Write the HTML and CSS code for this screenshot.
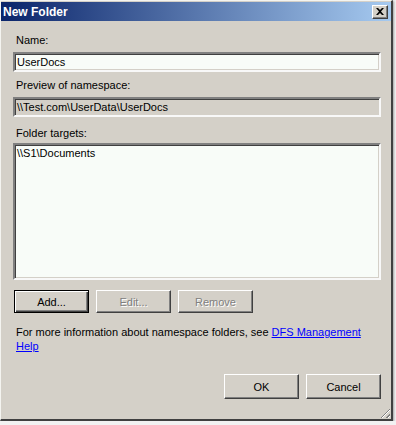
FILE: index.html
```html
<!DOCTYPE html>
<html lang="en">
<head>
    <meta charset="UTF-8">
    <title>New Folder</title>
    <link rel="stylesheet" href="styles.css">
</head>
<body>
    <div class="window">
        <div class="titlebar">
            <span class="title">New Folder</span>
            <button class="close">
                <svg width="8" height="7" viewBox="0 0 8 7"><path d="M0 0h2l2 2 2-2h2L5 3.5 8 7H6L4 5 2 7H0l3-3.5z" fill="#000"/></svg>
            </button>
        </div>
        <div class="content">
            <div class="label">Name:</div>
            <div class="field">UserDocs</div>
            <div class="label second">Preview of namespace:</div>
            <div class="field readonly">\\Test.com\UserData\UserDocs</div>
            <div class="label third">Folder targets:</div>
            <div class="list">\\S1\Documents</div>
            <div class="buttons">
                <button class="btn default">Add...</button>
                <button class="btn disabled">Edit...</button>
                <button class="btn disabled">Remove</button>
            </div>
            <p class="info">For more information about namespace folders, see <a href="#">DFS Management Help</a></p>
            <div class="footer">
                <button class="btn big">OK</button>
                <button class="btn big">Cancel</button>
            </div>
        </div>
        <div class="grip"></div>
    </div>
</body>
</html>
```
FILE: styles.css
```css
*{margin: 0;padding: 0;box-sizing: border-box;}
body{
    background: #f2f2f2;
    font: 11px "Liberation Sans", Arial, sans-serif;
    color: #000;
}
.window{
    position: relative;
    width: 393px;
    height: 421px;
    background: #d4d0c8;
    border-top: 1px solid #f4f4f0;
    border-left: 1px solid #f4f4f0;
    border-right: 2px solid #404040;
    border-bottom: 2px solid #404040;
    box-shadow: 1px 1px 2px rgba(0,0,0,.35);
}
.titlebar{
    height: 19px;
    margin-top: 1px;
    background: linear-gradient(to right, #0a246a, #a6caf0);
    display: flex;
    align-items: center;
    justify-content: space-between;
    padding: 0 3px 0 2px;
}
.title{
    color: #fff;
    font-weight: bold;
    font-size: 12px;
}
.close{
    width: 16px;
    height: 14px;
    background: #d4d0c8;
    border: 1px solid;
    border-color: #fff #404040 #404040 #fff;
    box-shadow: inset -1px -1px 0 #808080;
    display: flex;
    align-items: center;
    justify-content: center;
}
.content{
    padding: 13px 10px 0 12px;
}
.label{
    line-height: 13px;
    padding-left: 3px;
    margin-bottom: 5px;
}
.second{margin-top: 7px;}
.third{margin-top: 10px;margin-bottom: 3px;}
.field{
    height: 20px;
    line-height: 16px;
    padding-left: 2px;
    background: #f8fcf8;
    border: 2px solid;
    border-color: #808080 #f8f8f8 #f8f8f8 #808080;
    box-shadow: inset 1px 1px 0 #404040, inset -1px -1px 0 #d4d0c8;
}
.readonly{
    background: #d4d0c8;
}
.list{
    height: 137px;
    padding: 1px 0 0 2px;
    line-height: 14px;
    background: #f8fcf8;
    border: 2px solid;
    border-color: #808080 #f8f8f8 #f8f8f8 #808080;
    box-shadow: inset 1px 1px 0 #404040, inset -1px -1px 0 #d4d0c8;
}
.buttons{
    display: flex;
    gap: 7px;
    margin: 10px 0 0 1px;
}
.btn{
    width: 75px;
    height: 23px;
    font: 11px "Liberation Sans", Arial, sans-serif;
    color: #000;
    background: #d4d0c8;
    border: 1px solid;
    border-color: #fff #404040 #404040 #fff;
    box-shadow: inset -1px -1px 0 #808080;
}
.default{
    border: 1px solid #000;
    box-shadow: inset 1px 1px 0 #fff, inset -1px -1px 0 #404040, inset -2px -2px 0 #808080;
}
.disabled{
    color: #808080;
    text-shadow: 1px 1px 0 #fff;
}
.info{
    line-height: 14px;
    margin-top: 12px;
    padding-left: 3px;
    padding-right: 10px;
}
.info a{
    color: #0000ff;
}
.footer{
    display: flex;
    justify-content: flex-end;
    gap: 7px;
    margin-top: 21px;
}
.big{height: 25px;}
.grip{
    position: absolute;
    right: 1px;
    bottom: 1px;
    width: 12px;
    height: 12px;
    background: repeating-linear-gradient(135deg, transparent 0 2px, #808080 2px 3px, #fff 3px 4px);
    clip-path: polygon(100% 0, 100% 100%, 0 100%);
}
```
